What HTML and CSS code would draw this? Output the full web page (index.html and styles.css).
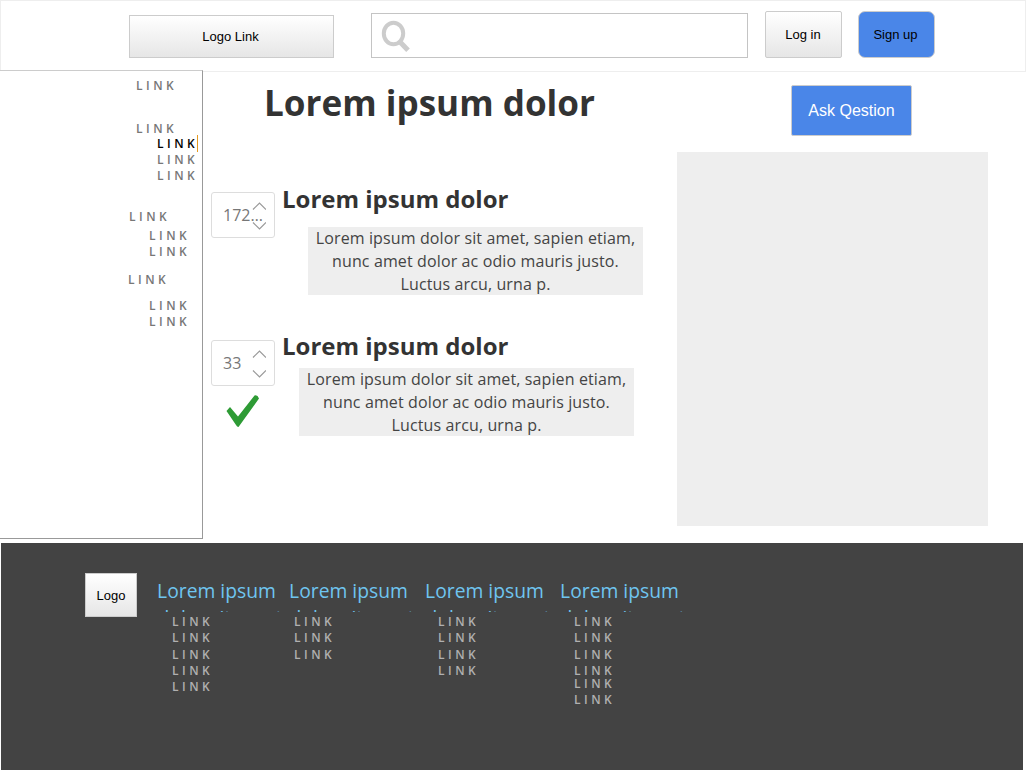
FILE: index.html
```html
<!DOCTYPE html>
<html lang="en">
<head>
<meta charset="utf-8">
<title>Lorem ipsum dolor</title>
<link rel="stylesheet" href="styles.css">
</head>
<body>
<header class="header">
  <button class="btn logo-link">Logo Link</button>
  <div class="search">
    <svg width="30" height="33" viewBox="0 0 30 33" fill="none" stroke="#ccc">
      <ellipse cx="12.5" cy="13.5" rx="9.7" ry="10.8" stroke-width="4"/>
      <path d="M19.3 22.2L27 30.3" stroke-width="5"/>
    </svg>
  </div>
  <button class="btn login">Log in</button>
  <button class="btn signup">Sign up</button>
</header>
<div class="page">
  <nav class="sidebar">
    <a class="link first">LINK</a>
    <a class="link second">LINK</a>
    <div class="group deep">
      <a class="link active">LINK</a>
      <a class="link">LINK</a>
      <a class="link">LINK</a>
    </div>
    <a class="link third">LINK</a>
    <div class="group near">
      <a class="link">LINK</a>
      <a class="link">LINK</a>
    </div>
    <a class="link fourth">LINK</a>
    <div class="group last">
      <a class="link">LINK</a>
      <a class="link">LINK</a>
    </div>
  </nav>
  <main class="content">
    <h1 class="title">Lorem ipsum dolor</h1>
    <article class="post">
      <div class="rating">
        <div class="votes">
          <span class="count">172…</span>
          <svg class="arrows" width="14" height="28" viewBox="0 0 14 28" fill="none" stroke="#999" stroke-width="1.2"><path d="M1 7.500L7.500 1L14 7.500M1 20.500L7.500 27L14 20.500"/></svg>
        </div>
      </div>
      <div class="body">
        <h2 class="subtitle">Lorem ipsum dolor</h2>
        <p class="text">Lorem ipsum dolor sit amet, sapien etiam, nunc amet dolor ac odio mauris justo. Luctus arcu, urna p.</p>
      </div>
    </article>
    <article class="post answer">
      <div class="rating">
        <div class="votes">
          <span class="count">33</span>
          <svg class="arrows" width="14" height="28" viewBox="0 0 14 28" fill="none" stroke="#999" stroke-width="1.2"><path d="M1 7.500L7.500 1L14 7.500M1 20.500L7.500 27L14 20.500"/></svg>
        </div>
        <svg class="check" width="34" height="34" viewBox="0 0 34 34"><path fill="#2e9b35" d="M0.500 17L4 13L12 22.500L28.500 1.500Q31.500 0.500 33 4.500L12.500 33Q11 33 10 31Z"/></svg>
      </div>
      <div class="body">
        <h2 class="subtitle">Lorem ipsum dolor</h2>
        <p class="text">Lorem ipsum dolor sit amet, sapien etiam, nunc amet dolor ac odio mauris justo. Luctus arcu, urna p.</p>
      </div>
    </article>
  </main>
  <aside class="aside">
    <button class="btn ask">Ask Qestion</button>
    <div class="panel"></div>
  </aside>
</div>
<footer class="footer">
  <button class="btn logo">Logo</button>
  <section class="col col-a">
    <h3 class="heading">Lorem ipsum <span class="rest">dolor sit amet</span></h3>
    <div class="links"><a class="link">LINK</a><a class="link">LINK</a><a class="link gap">LINK</a><a class="link">LINK</a><a class="link">LINK</a></div>
  </section>
  <section class="col col-b">
    <h3 class="heading">Lorem ipsum <span class="rest">dolor sit amet</span></h3>
    <div class="links"><a class="link">LINK</a><a class="link">LINK</a><a class="link gap">LINK</a></div>
  </section>
  <section class="col col-c">
    <h3 class="heading">Lorem ipsum <span class="rest">dolor sit amet</span></h3>
    <div class="links"><a class="link">LINK</a><a class="link">LINK</a><a class="link gap">LINK</a><a class="link">LINK</a></div>
  </section>
  <section class="col col-d">
    <h3 class="heading">Lorem ipsum <span class="rest">dolor sit amet</span></h3>
    <div class="links"><a class="link">LINK</a><a class="link">LINK</a><a class="link gap">LINK</a><a class="link">LINK</a><a class="link tight">LINK</a><a class="link">LINK</a></div>
  </section>
</footer>
</body>
</html>
```
FILE: styles.css
```css
* { box-sizing: border-box; }
body { margin: 0; background: #fff; font-family: "Open Sans", sans-serif; color: #333; overflow: hidden; }
h1, h2, h3, p { margin: 0; }
svg { display: block; }

.header { display: flex; align-items: flex-start; height: 72px; border: 1px solid #eee; padding: 10px 0 0 128px; }
.btn { font-family: "Liberation Sans", sans-serif; font-size: 13px; color: #000; border: 1px solid #ccc; padding: 0; background: linear-gradient(#fff, #e6e6e6); }
.logo-link { width: 205px; height: 43px; margin-top: 4px; padding-right: 2px; }
.search { width: 377px; height: 45px; margin: 2px 0 0 37px; padding: 6px 0 0 9px; border: 1px solid #c4c4c4; }
.login { width: 77px; height: 47px; margin-left: 17px; border-radius: 2px; padding-right: 1px; }
.signup { width: 77px; height: 47px; margin-left: 16px; border-radius: 7px; background: #4a86e8; padding-right: 2px; }

.page { display: flex; height: 471px; }
.sidebar { position: relative; display: flex; flex-direction: column; width: 203px; height: 469px; margin-top: -2px; padding-top: 7px; background: #fff; border: solid #999; border-width: 1px 1px 1px 0; border-top-color: #ccc; }
.link { display: block; height: 16px; font-size: 12px; font-weight: 600; line-height: 16px; letter-spacing: 3.500px; color: #777; }
.first { margin-left: 136px; }
.second { margin: 27px 0 0 136px; }
.group { display: flex; flex-direction: column; }
.deep { margin: -1px 0 0 157px; }
.active { color: #000; width: 41px; height: 17px; margin: -1px 0 0; padding-top: 1px; border-right: 1px solid #e69a1f; }
.third { margin: 25px 0 0 129px; }
.near { margin: 3px 0 0 149px; }
.fourth { margin: 12px 0 0 128px; }
.last { margin: 10px 0 0 149px; }

.content { width: 474px; padding-top: 5px; }
.title { margin-left: 61px; font-size: 35.100px; line-height: 50px; }
.post { display: flex; height: 147px; margin-top: 55px; padding-left: 8px; }
.answer { margin-top: 0; }
.rating { width: 64px; padding-top: 10px; }
.answer .rating { padding-top: 11px; }
.votes { position: relative; height: 46px; border: 1px solid #ddd; border-radius: 3px; padding: 10px 0 0 11px; }
.count { display: block; font-size: 16px; line-height: 24px; color: #777; }
.arrows { position: absolute; left: 40px; top: 9px; }
.check { margin: 8px 0 0 15px; }
.body { margin-left: 7px; }
.subtitle { font-size: 24px; line-height: 34px; }
.text { width: 335px; height: 68px; margin: 11px 0 0 26px; padding: 0 5px; background: #eee; font-size: 16px; line-height: 23px; letter-spacing: 0.120px; text-align: center; color: #444; }
.answer .text { margin: 5px 0 0 17px; }

.aside { display: flex; flex-direction: column; width: 311px; padding-top: 13px; }
.ask { width: 121px; height: 51px; margin-left: 114px; border-radius: 2px; background: #4a86e8; color: #fff; font-size: 16px; }
.panel { height: 374px; margin-top: 16px; background: #eee; }

.footer { display: flex; width: 1022px; height: 227px; margin-left: 1px; padding: 30px 0 0 84px; background: #434343; }
.logo { width: 52px; height: 44px; }
.col { width: 132px; padding-top: 5px; }
.col-a { margin-left: 13px; }
.col-c { margin-left: 4px; }
.col-d { margin-left: 3px; }
.heading { height: 34px; overflow: hidden; padding-left: 1px; font-size: 19.300px; font-weight: 400; line-height: 26px; text-align: center; color: #6fc5f0; }
.rest { display: block; padding: 1px 0 0 5px; margin-right: -2px; white-space: nowrap; }
.links { margin: 2px 0 0 22px; }
.col-b .links { margin-left: 12px; }
.col-c .links { margin-left: 20px; }
.col-d .links { margin-left: 21px; }
.links .link { color: #b0b0b0; }
.links .gap { margin-top: 1px; }
.links .tight { margin-top: -3px; }
```
